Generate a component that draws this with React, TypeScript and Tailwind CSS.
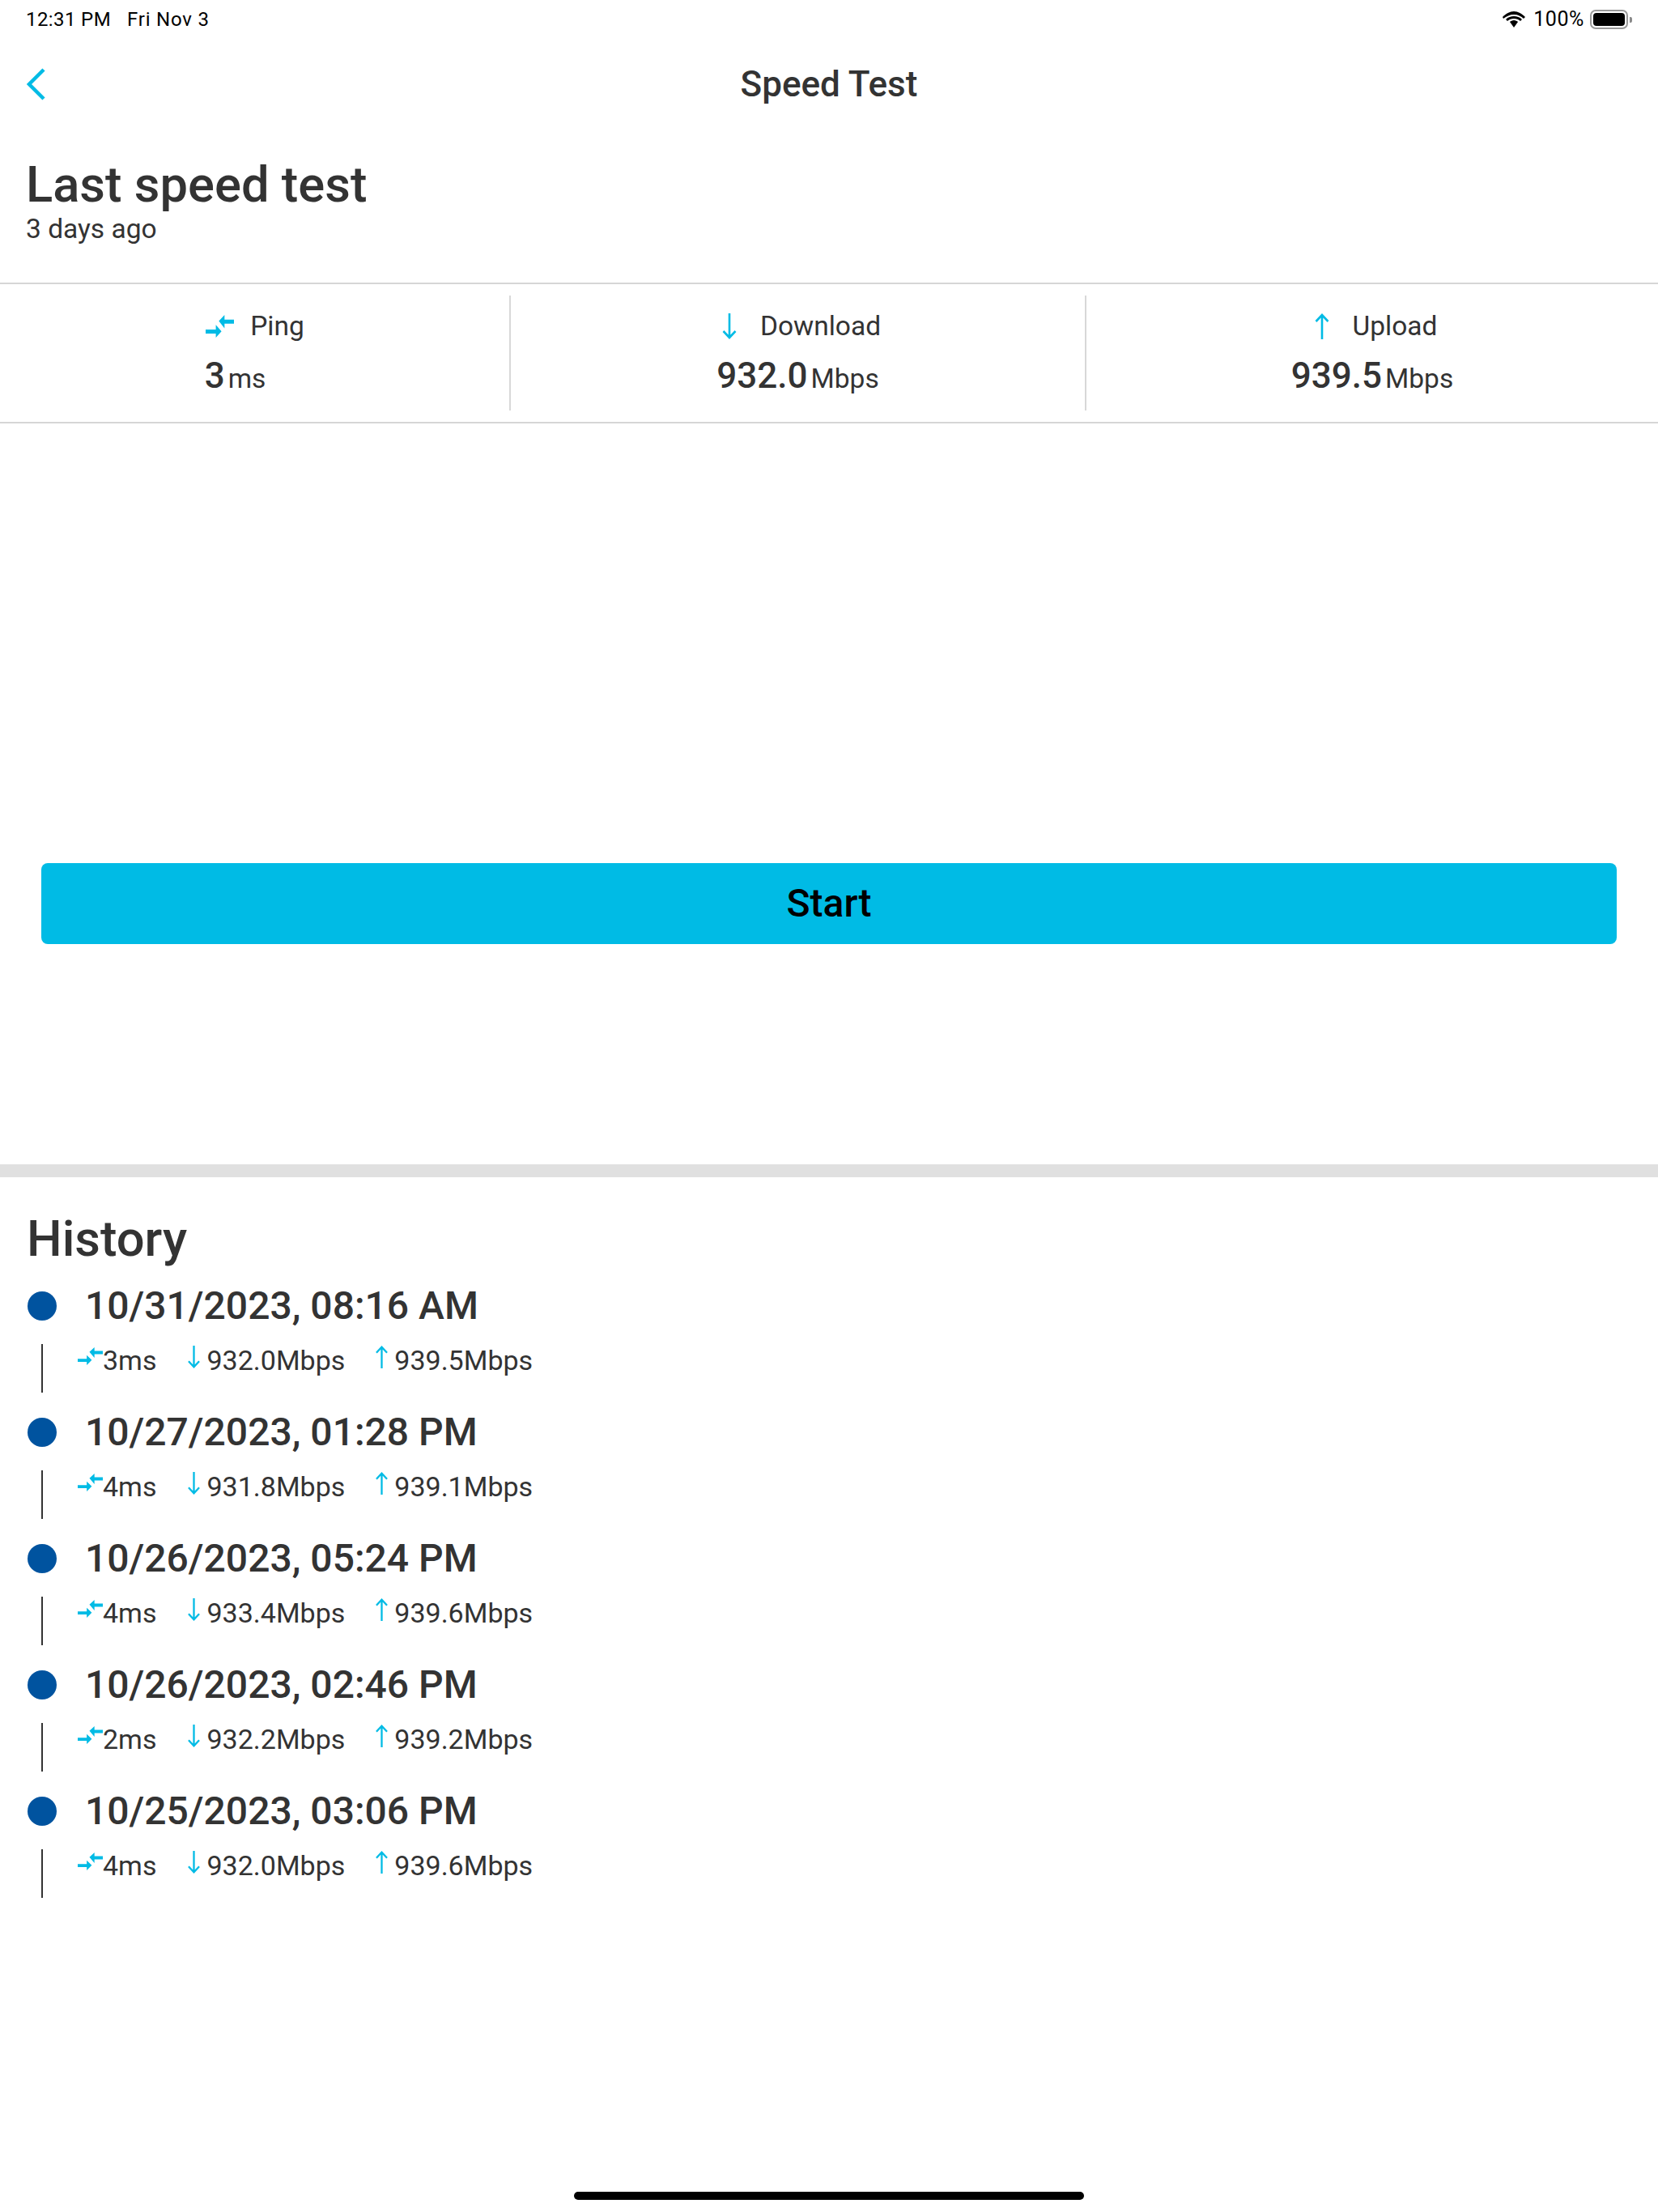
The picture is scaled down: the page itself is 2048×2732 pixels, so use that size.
import React from "react";

const CY = "#00bbe5";

function PingIcon({ className }: { className: string }) {
  return (
    <svg className={className} viewBox="0 0 75 68" fill={CY} preserveAspectRatio="none">
      <path d="M35 18 50 0v14h25v12H50v14z" />
      <path d="M0 44h27V30l15 19-15 19V56H0z" />
    </svg>
  );
}
function Down({ className }: { className: string }) {
  return (
    <svg className={className} viewBox="0 0 18 32" fill="none" stroke={CY} strokeWidth="2.6">
      <path d="M9 0v30M1.5 22 9 30l7.5-8" />
    </svg>
  );
}
function Up({ className }: { className: string }) {
  return (
    <svg className={className} viewBox="0 0 18 32" fill="none" stroke={CY} strokeWidth="2.6">
      <path d="M9 32V2M1.5 10 9 2l7.5 8" />
    </svg>
  );
}

function Stat({ icon, label, value, unit, width, border, valueClass }: { icon: React.ReactNode; label: string; value: string; unit: string; width: string; border?: boolean; valueClass?: string }) {
  return (
    <div className={`${width} ${border ? "border-r-2 border-[#d8d8d8]" : ""} flex flex-col items-center`}>
      <div className="flex items-center h-[48px] mt-[14px]">
        <div className="w-[36px] flex justify-center">{icon}</div>
        <span className="text-[33.5px] leading-[48px] ml-[20px]">{label}</span>
      </div>
      <div className={`flex items-baseline h-[50px] mt-[12px] ${valueClass ?? ""}`}>
        <span className="text-[44px] leading-[50px] font-medium">{value}</span>
        <span className="text-[33.5px] leading-[50px] ml-[4px]">{unit}</span>
      </div>
    </div>
  );
}

const history = [
  ["10/31/2023, 08:16 AM", "3ms", "932.0Mbps", "939.5Mbps"],
  ["10/27/2023, 01:28 PM", "4ms", "931.8Mbps", "939.1Mbps"],
  ["10/26/2023, 05:24 PM", "4ms", "933.4Mbps", "939.6Mbps"],
  ["10/26/2023, 02:46 PM", "2ms", "932.2Mbps", "939.2Mbps"],
  ["10/25/2023, 03:06 PM", "4ms", "932.0Mbps", "939.6Mbps"],
];

export default function App() {
  return (
    <div className="w-[2048px] h-[2732px] bg-white flex flex-col text-[#333333] font-['Roboto',sans-serif]">
      {/* status bar */}
      <div className="flex items-center justify-between h-[48px] pl-[32px] pr-[32px] text-black text-[24px]">
        <div className="flex gap-[20px]">
          <span className="tracking-[0.4px]">12:31 PM</span>
          <span className="tracking-[0.8px]">Fri Nov 3</span>
        </div>
        <div className="flex items-center">
          <svg className="w-[28px] h-[20px]" viewBox="0 0 28 20" fill="black">
            <path d="M14 4C9 4 5 6 1 9L0 7c4-4 9-7 14-7s10 3 14 7l-2 2c-3-3-7-5-12-5z" />
            <path d="M14 9c-3 0-6 1-8 3l-2-2c3-3 6-4 10-4s7 1 10 4l-2 2c-2-2-5-3-8-3z" />
            <path d="M14 11c-2 0-4 1-5 2l5 7 5-7c-1-1-3-2-5-2z" />
          </svg>
          <span className="ml-[10px] text-[25px] tracking-[0.6px]">100%</span>
          <div className="ml-[7px] w-[47px] h-[24px] rounded-[7px] border-2 border-[#9a9a9a] p-[2px]">
            <div className="w-full h-full bg-black rounded-[4px]" />
          </div>
          <div className="ml-[2px] w-[3px] h-[7px] bg-[#8a8a8a] rounded-r-[2px]" />
        </div>
      </div>

      {/* nav */}
      <div className="grid grid-cols-3 items-center h-[112px]">
        <svg className="ml-[32px] w-[24px] h-[40px]" viewBox="0 0 24 40" fill="none" stroke={CY} strokeWidth="4.5">
          <path d="M22 2 4 20l18 18" />
        </svg>
        <div className="text-[44px] font-medium text-center whitespace-nowrap">Speed Test</div>
      </div>

      {/* last */}
      <div className="pl-[32px] h-[189px] pt-[33px]">
        <div className="text-[61.5px] leading-[70px] font-medium">Last speed test</div>
        <div className="text-[33.5px] leading-[40px]">3 days ago</div>
      </div>

      {/* stats */}
      <div className="flex h-[174px] border-y-2 border-[#d6d6d6] py-[14px]">
        <Stat width="w-[631px]" border valueClass="mr-[48px]" icon={<PingIcon className="w-[35px] h-[28px]" />} label="Ping" value="3" unit="ms" />
        <Stat width="w-[711px]" border icon={<Down className="w-[18px] h-[34px]" />} label="Download" value="932.0" unit="Mbps" />
        <Stat width="flex-1" icon={<Up className="w-[18px] h-[34px]" />} label="Upload" value="939.5" unit="Mbps" />
      </div>

      {/* start */}
      <div className="h-[931px] px-[51px] pt-[543px] border-b-[16px] border-[#e0e0e0]">
        <div className="h-[100px] rounded-[8px] bg-[#00bbe5] flex items-center justify-center text-black text-[48px] font-medium">
          Start
        </div>
      </div>

      {/* history */}
      <div className="pl-[33px] pt-[36px]">
        <div className="text-[61.5px] leading-[80px] mb-[14px] font-medium">History</div>
        <div className="flex flex-col">
          {history.map((h) => (
            <div key={h[0]} className="h-[156px]">
              <div className="flex items-center h-[58px]">
                <div className="ml-[1px] w-[36px] h-[36px] rounded-full bg-[#00539f]" />
                <div className="ml-[35px] text-[48px] leading-[58px] font-medium">{h[0]}</div>
              </div>
              <div className="flex">
                <div className="ml-[18px] mt-[18px] w-[2px] h-[60px] bg-[#333333]" />
                <div className="ml-[43px] flex items-start h-[60px] pt-[14px] text-[34px] leading-[48px]">
                  <PingIcon className="w-[31px] h-[22px] mt-[8px]" />
                  <span>{h[1]}</span>
                  <Down className="w-[17px] h-[28px] ml-[38px] mr-[7px] mt-[6px]" />
                  <span>{h[2]}</span>
                  <Up className="w-[17px] h-[28px] ml-[37px] mr-[7px] mt-[6px]" />
                  <span>{h[3]}</span>
                </div>
              </div>
            </div>
          ))}
        </div>
      </div>

      {/* home */}
      <div className="mt-auto mb-[15px] mx-auto w-[630px] h-[10px] rounded-full bg-black" />
    </div>
  );
}
